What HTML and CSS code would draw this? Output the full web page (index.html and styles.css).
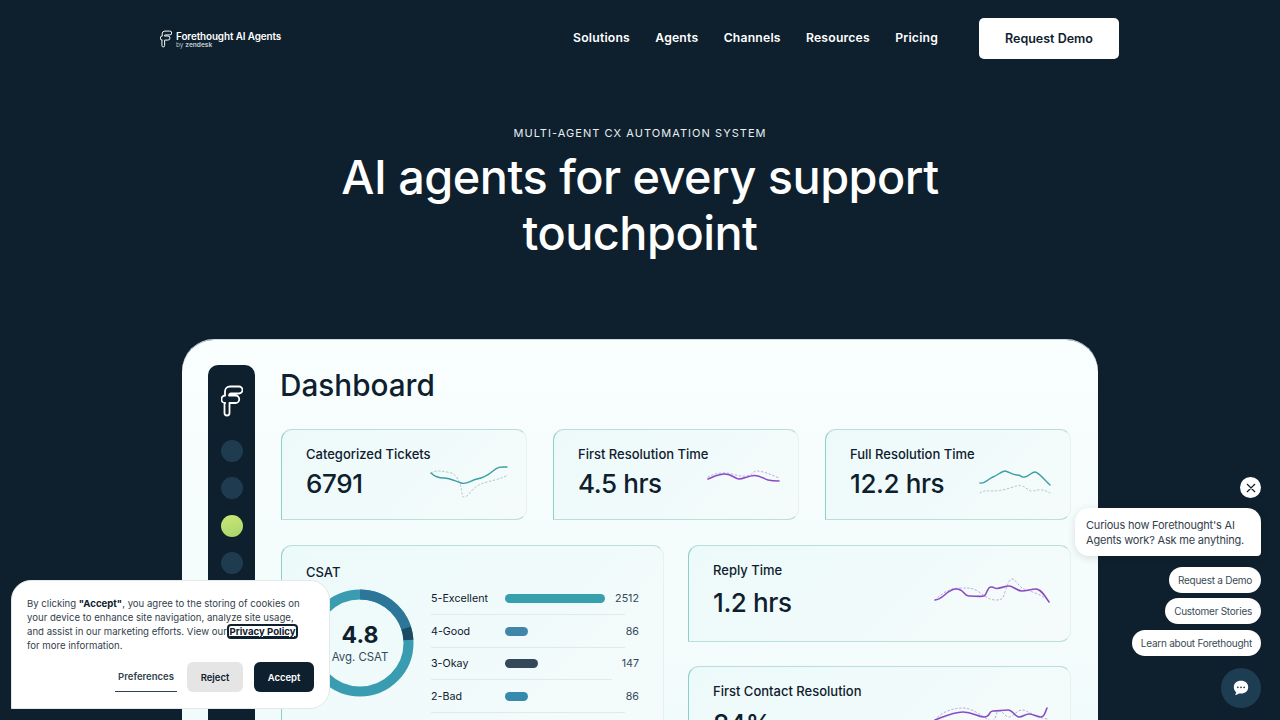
FILE: index.html
```html
<!DOCTYPE html>
<html lang="en">
<head>
    <meta charset="UTF-8">
    <meta name="viewport" content="width=device-width, initial-scale=1.0">
    <title>Forethought AI Agents</title>
    <link rel="stylesheet" href="styles.css">
</head>
<body>
    <svg class="svg-defs" width="0" height="0">
        <symbol id="f-mark" viewBox="0 0 22 32">
            <path d="M4 10.500V6.500a5 5 0 0 1 5-5h9a3.500 3.500 0 0 1 0 7h-8a2 2 0 0 0-2 2h6.500a3.700 3.700 0 0 1 0 7.500H8.500V28a2.500 2.500 0 0 1-5 0V18h.7a3.750 3.750 0 0 1 0-7.500z" fill="none" stroke="currentColor" stroke-width="1.800" stroke-linejoin="round"/>
        </symbol>
    </svg>

    <header class="site-header">
        <a class="logo" href="#">
            <svg class="logo-mark"><use href="#f-mark"/></svg>
            <span class="logo-text">
                <span class="logo-name">Forethought AI Agents</span>
                <span class="logo-by">by <b>zendesk</b></span>
            </span>
        </a>
        <nav class="main-nav">
            <a href="#">Solutions</a>
            <a href="#">Agents</a>
            <a href="#">Channels</a>
            <a href="#">Resources</a>
            <a href="#">Pricing</a>
        </nav>
        <a class="demo-button" href="#">Request Demo</a>
    </header>

    <section class="hero">
        <p class="eyebrow">MULTI-AGENT CX AUTOMATION SYSTEM</p>
        <h1>AI agents for every support touchpoint</h1>
    </section>

    <section class="dashboard">
        <aside class="side-rail">
            <svg class="rail-mark"><use href="#f-mark"/></svg>
            <span class="rail-dot"></span>
            <span class="rail-dot"></span>
            <span class="rail-dot active"></span>
            <span class="rail-dot"></span>
            <span class="rail-dot"></span>
        </aside>
        <div class="dash-main">
            <h2>Dashboard</h2>
            <div class="stat-row">
                <div class="stat-card">
                    <div>
                        <div class="stat-label">Categorized Tickets</div>
                        <div class="stat-value">6791</div>
                    </div>
                    <svg class="spark spark-a" viewBox="0 0 76 32">
                        <path class="ghost" d="M0 7C5 4 10 5 16 6S26 9 29 18 30 32 34 31 40 23 48 19 64 15 75 10"/>
                        <path class="teal" d="M0 7C4 11 8 12 13 12S24 15 30 17 40 14 46 13 56 10 62 5 70 1 76 1"/>
                    </svg>
                </div>
                <div class="stat-card">
                    <div>
                        <div class="stat-label">First Resolution Time</div>
                        <div class="stat-value">4.5 hrs</div>
                    </div>
                    <svg class="spark spark-b" viewBox="0 0 71 32">
                        <path class="ghost purple-ghost" d="M0 11C5 8 10 7 17 7S30 11 38 10 44 5 49 5 62 8 71 12"/>
                        <path class="purple" d="M0 13C5 11 10 8 17 8S27 13 31 13 40 10 46 9.500 56 13 60 14 66 15 71 15"/>
                    </svg>
                </div>
                <div class="stat-card">
                    <div>
                        <div class="stat-label">Full Resolution Time</div>
                        <div class="stat-value">12.2 hrs</div>
                    </div>
                    <svg class="spark spark-b" viewBox="0 0 71 32">
                        <path class="ghost" d="M0 27C4 24 8 25 13 25S24 24 30 22 38 19 42 20 48 25 52 25 58 23 62 24 67 25 70 27"/>
                        <path class="teal" d="M0 17C5 18 8 13 13 11S22 5 25 5 32 9 37 9 41 12 45 11 52 6 55 6 62 11 70 19"/>
                    </svg>
                </div>
            </div>
            <div class="lower-grid">
                <div class="stat-card csat-card">
                    <div class="stat-label">CSAT</div>
                    <div class="csat-body">
                        <div class="donut">
                            <svg viewBox="0 0 108 108">
                                <circle class="ring" cx="54" cy="54" r="48.5"/>
                                <circle class="ring ring-blue" cx="54" cy="54" r="48.5" pathLength="100" stroke-dasharray="20 80" stroke-dashoffset="0"/>
                                <circle class="ring ring-dark" cx="54" cy="54" r="48.5" pathLength="100" stroke-dasharray="4 96" stroke-dashoffset="-20"/>
                            </svg>
                            <div class="donut-text">
                                <strong>4.8</strong>
                                <span>Avg. CSAT</span>
                            </div>
                        </div>
                        <div class="csat-list">
                            <div class="csat-row"><span class="csat-name">5-Excellent</span><span class="csat-track"><i class="bar bar-teal" style="width:100px"></i></span><span class="csat-num">2512</span></div>
                            <div class="csat-row"><span class="csat-name">4-Good</span><span class="csat-track"><i class="bar bar-steel" style="width:23px"></i></span><span class="csat-num">86</span></div>
                            <div class="csat-row short"><span class="csat-name">3-Okay</span><span class="csat-track"><i class="bar bar-slate" style="width:33px"></i></span><span class="csat-num">147</span></div>
                            <div class="csat-row"><span class="csat-name">2-Bad</span><span class="csat-track"><i class="bar bar-blue" style="width:23px"></i></span><span class="csat-num">86</span></div>
                        </div>
                    </div>
                </div>
                <div class="side-stats">
                    <div class="stat-card wide">
                        <div>
                            <div class="stat-label">Reply Time</div>
                            <div class="stat-value">1.2 hrs</div>
                        </div>
                        <svg class="spark spark-wide" viewBox="0 0 114 32">
                            <path class="ghost purple-ghost" d="M0 22C6 16 14 10 25 10S38 10 44 14 54 22 61 22 68 20 70 14 74 1 77 1 83 7 87 10 104 14 114 23"/>
                            <path class="purple" d="M0 22C8 22 12 11 21 11S28 18 34 18 46 19 49 18 52 9 56 9 59 10.500 62 10.500 70 8 74 8 82 13 87 13 96 11 101 11 110 18 114 24"/>
                        </svg>
                    </div>
                    <div class="stat-card wide">
                        <div>
                            <div class="stat-label">First Contact Resolution</div>
                            <div class="stat-value">84%</div>
                        </div>
                        <svg class="spark spark-wide" viewBox="0 0 114 32">
                            <path class="ghost purple-ghost" d="M0 21C6 13 18 9 28 9S46 17 54 21 60 12 64 12 70 18 74 18 82 11 87 11 100 18 112 20"/>
                            <path class="purple" d="M0 21C8 18 18 13 28 13S42 18 49 18 53 12 58 12 68 11 73 11 80 18 84 18 90 15 94 15 102 18 106 18 110 13 112 9"/>
                        </svg>
                    </div>
                </div>
            </div>
        </div>
    </section>

    <div class="cookie-box">
        <p>By clicking <b>"Accept"</b>, you agree to the storing of cookies on your device to enhance site navigation, analyze site usage, and assist in our marketing efforts. View our <a href="#">Privacy Policy</a> for more information.</p>
        <div class="cookie-actions">
            <button class="cookie-pref">Preferences</button>
            <button class="cookie-reject">Reject</button>
            <button class="cookie-accept">Accept</button>
        </div>
    </div>

    <div class="chat-widget">
        <button class="chat-close" aria-label="Close">
            <svg viewBox="0 0 12 12" width="10" height="10"><path d="M1.500 1.500l9 9M10.500 1.500l-9 9" stroke="#0e202d" stroke-width="1.400" stroke-linecap="round"/></svg>
        </button>
        <div class="chat-bubble">Curious how Forethought's AI Agents work? Ask me anything.</div>
        <button class="chat-chip">Request a Demo</button>
        <button class="chat-chip">Customer Stories</button>
        <button class="chat-chip">Learn about Forethought</button>
        <button class="chat-launch" aria-label="Open chat">
            <svg viewBox="0 0 20 20" width="18" height="18">
                <path d="M10 2c-4.700 0-8 3-8 7.200 0 2.300 1 4.200 2.700 5.500-.1 1-.6 2-1.400 2.800 1.800 0 3.300-.6 4.500-1.500.7.200 1.400.2 2.200.2 4.700 0 8-2.800 8-7S14.700 2 10 2z" fill="#fff"/>
                <circle cx="6.500" cy="9.300" r="1" fill="#1d3d52"/><circle cx="10" cy="9.300" r="1" fill="#1d3d52"/><circle cx="13.500" cy="9.300" r="1" fill="#1d3d52"/>
            </svg>
        </button>
    </div>
</body>
</html>
```

FILE: styles.css
```css
html, body {
    margin: 0;
    height: 720px;
    overflow: hidden;
}
body {
    background: #0e202d;
    color: #fff;
    font-family: Inter, "Noto Sans", sans-serif;
}
a {
    color: inherit;
    text-decoration: none;
}
button {
    font-family: inherit;
    border: none;
    cursor: pointer;
}
.svg-defs {
    position: absolute;
}

.site-header {
    display: flex;
    align-items: center;
    height: 41px;
    padding: 18px 161px 0 160px;
}
.logo {
    display: flex;
    align-items: center;
    gap: 4px;
    margin-right: auto;
    margin-top: 1px;
}
.logo-mark {
    width: 12px;
    height: 18px;
}
.logo-text {
    display: flex;
    flex-direction: column;
}
.logo-name {
    font-size: 9.900px;
    font-weight: 600;
    line-height: 12px;
    letter-spacing: -0.1px;
}
.logo-by {
    font-size: 6.500px;
    line-height: 7px;
    color: #b9c3ca;
}
.main-nav {
    display: flex;
    gap: 25.300px;
    margin-right: 41px;
    margin-top: -2px;
}
.main-nav a {
    font-size: 12.200px;
    font-weight: 600;
    letter-spacing: 0.2px;
}
.demo-button {
    display: flex;
    align-items: center;
    justify-content: center;
    width: 140px;
    height: 41px;
    background: #fff;
    color: #0e202d;
    border-radius: 5px;
    font-size: 12.500px;
    font-weight: 600;
}

.hero {
    text-align: center;
    padding-top: 67px;
}
.eyebrow {
    margin: 0;
    font-size: 11px;
    line-height: 15px;
    letter-spacing: 1.050px;
    color: #e8edf0;
}
.hero h1 {
    width: 640px;
    margin: 8px auto 0;
    font-size: 46.800px;
    font-weight: 500;
    line-height: 56px;
    letter-spacing: -0.5px;
}

.dashboard {
    display: flex;
    gap: 26px;
    width: 916px;
    height: 380px;
    overflow: hidden;
    box-sizing: border-box;
    margin: 79px auto 0;
    padding: 25px 27px 0 26px;
    background: linear-gradient(180deg, #f9fefe, #f2fbfb);
    border-radius: 32px 32px 0 0;
    box-shadow: 0 -1px 0 #c9dde3;
    color: #0e202d;
}
.side-rail {
    display: flex;
    flex-direction: column;
    align-items: center;
    flex: none;
    width: 47px;
    height: 400px;
    padding-top: 20px;
    box-sizing: border-box;
    background: #0e202d;
    border-radius: 10px;
}
.rail-mark {
    width: 22px;
    height: 32px;
    margin-bottom: 23px;
    color: #fff;
}
.rail-dot {
    flex: none;
    width: 22px;
    height: 22px;
    margin-bottom: 15.300px;
    border-radius: 50%;
    background: #1f3b50;
}
.rail-dot.active {
    background: linear-gradient(160deg, #cbe878, #a6d46c);
}
.dash-main {
    flex: 1;
    min-width: 0;
}
.dash-main h2 {
    margin: 1px 0 25px -1px;
    font-size: 29.700px;
    font-weight: 500;
    line-height: 38px;
}

.stat-row {
    display: grid;
    grid-template-columns: repeat(3, minmax(0, 1fr));
    gap: 26px;
}
.stat-card {
    display: flex;
    justify-content: space-between;
    box-sizing: border-box;
    background: linear-gradient(135deg, #edfafa, #f5fbfb);
    border: 1px solid #e6f1f1;
    border-top-color: #b9dedb;
    border-left-color: #8fcfc9;
    border-bottom-color: #b9dedb;
    border-radius: 11px 11px 11px 0;
}
.stat-row .stat-card {
    height: 91px;
    padding: 15px 19px 0 24px;
}
.stat-label {
    font-size: 13px;
    font-weight: 500;
    line-height: 18px;
    white-space: nowrap;
}
.stat-value {
    margin-top: 4px;
    font-size: 26px;
    font-weight: 500;
    line-height: 34px;
    letter-spacing: -0.4px;
    white-space: nowrap;
}
.spark {
    flex: none;
    fill: none;
    overflow: visible;
}
.spark-a {
    width: 76px;
    height: 32px;
    margin-top: 21px;
}
.spark-b {
    width: 71px;
    height: 32px;
    margin-top: 21px;
}
.spark-wide {
    width: 114px;
    height: 32px;
    margin-top: 17px;
}
.spark path {
    fill: none;
    stroke-width: 1.400;
    stroke-linecap: round;
}
.spark .teal {
    stroke: #3c9ea3;
}
.spark .purple {
    stroke: #8a4cc4;
    stroke-width: 1.600;
}
.spark .ghost {
    stroke: #a9c4c6;
    stroke-width: 1;
    stroke-dasharray: 1.500 2.500;
}
.spark .purple-ghost {
    stroke: #b9a5d8;
}

.lower-grid {
    display: flex;
    gap: 24px;
    margin-top: 25px;
}
.csat-card {
    display: block;
    width: 383px;
    height: 220px;
    flex: none;
    padding: 17px 24px 0 24px;
}
.csat-body {
    display: flex;
    gap: 17px;
    margin-top: 1px;
}
.donut {
    position: relative;
    flex: none;
    width: 108px;
    height: 108px;
    margin-top: 7px;
}
.donut svg {
    display: block;
    transform: rotate(-90deg);
}
.ring {
    fill: none;
    stroke: #3a9cb0;
    stroke-width: 10;
}
.ring-blue {
    stroke: #2d7699;
}
.ring-dark {
    stroke: #1d4a63;
}
.donut-text {
    position: absolute;
    inset: 0;
    display: flex;
    flex-direction: column;
    align-items: center;
    justify-content: center;
}
.donut-text strong {
    font-size: 23px;
    font-weight: 700;
    line-height: 28px;
}
.donut-text span {
    font-size: 11.400px;
    line-height: 16px;
    color: #33495a;
}
.csat-list {
    flex: 1;
    min-width: 0;
}
.csat-row {
    display: flex;
    align-items: center;
    height: 32.800px;
    background: linear-gradient(#dcecec, #dcecec) left bottom / 194px 1px no-repeat;
    font-size: 10.700px;
}
.csat-row.short {
    background-size: 181px 1px;
}
.csat-name {
    flex: none;
    width: 74px;
}
.csat-track {
    flex: 1;
    display: flex;
}
.csat-num {
    color: #33495a;
}
.bar {
    display: block;
    height: 9px;
    border-radius: 5px;
}
.bar-teal { background: #38a0ad; }
.bar-steel { background: #4285aa; }
.bar-slate { background: #33495a; }
.bar-blue { background: #358aae; }

.side-stats {
    flex: 1;
    display: flex;
    flex-direction: column;
    gap: 24px;
}
.stat-card.wide {
    flex: none;
    height: 97px;
    padding: 15px 21px 0 24px;
}
.wide .stat-value {
    margin-top: 7px;
}

.cookie-box {
    position: absolute;
    left: 11px;
    top: 580px;
    width: 319px;
    height: 129px;
    box-sizing: border-box;
    padding: 16px 15px 0;
    background: #fff;
    border: 1px solid #e3e8e8;
    border-radius: 20px 20px 20px 0;
    color: #33414c;
}
.cookie-box p {
    max-width: 275px;
    margin: 0;
    font-size: 9.600px;
    line-height: 14px;
}
.cookie-box b {
    color: #0e202d;
}
.cookie-box a {
    font-weight: 700;
    color: #0e202d;
    text-decoration: underline;
    outline: 2px solid #0e202d;
    outline-offset: 0;
    border-radius: 2px;
}
.cookie-actions {
    display: flex;
    justify-content: flex-end;
    gap: 10px;
    margin-top: 9px;
}
.cookie-actions button {
    height: 30px;
    padding: 0;
    border-radius: 6px;
    font-size: 9.500px;
    font-weight: 600;
}
.cookie-pref {
    width: 62px;
    background: none;
    color: #33414c;
    border-bottom: 1px solid #33414c !important;
    border-radius: 0 !important;
}
.cookie-reject {
    width: 56px;
    margin-right: 1px;
    background: #e5e5e5;
    color: #0e202d;
}
.cookie-accept {
    width: 60px;
    background: #0e202d;
    color: #fff;
}

.chat-widget {
    position: absolute;
    right: 19px;
    top: 477px;
    display: flex;
    flex-direction: column;
    align-items: flex-end;
    width: 186px;
}
.chat-close {
    display: flex;
    align-items: center;
    justify-content: center;
    width: 21px;
    height: 21px;
    padding: 0;
    background: #fff;
    border-radius: 50%;
}
.chat-bubble {
    box-sizing: border-box;
    width: 186px;
    margin-top: 10px;
    padding: 10px 10px 8px 11px;
    background: #fff;
    color: #33414c;
    border-radius: 14px 14px 4px 14px;
    font-size: 11px;
    line-height: 15px;
    letter-spacing: -0.2px;
    box-shadow: 0 2px 8px rgba(0,0,0,0.12);
}
.chat-chip {
    height: 26px;
    margin-top: 5.300px;
    padding: 0 9px;
    background: #fff;
    color: #3b4a55;
    border-radius: 13px;
    font-size: 10px;
    letter-spacing: -0.25px;
}
.chat-bubble + .chat-chip {
    margin-top: 11px;
}
.chat-launch {
    display: flex;
    align-items: center;
    justify-content: center;
    width: 40px;
    height: 40px;
    padding: 0;
    margin-top: 12px;
    background: #1d3d52;
    border-radius: 50%;
}
```
